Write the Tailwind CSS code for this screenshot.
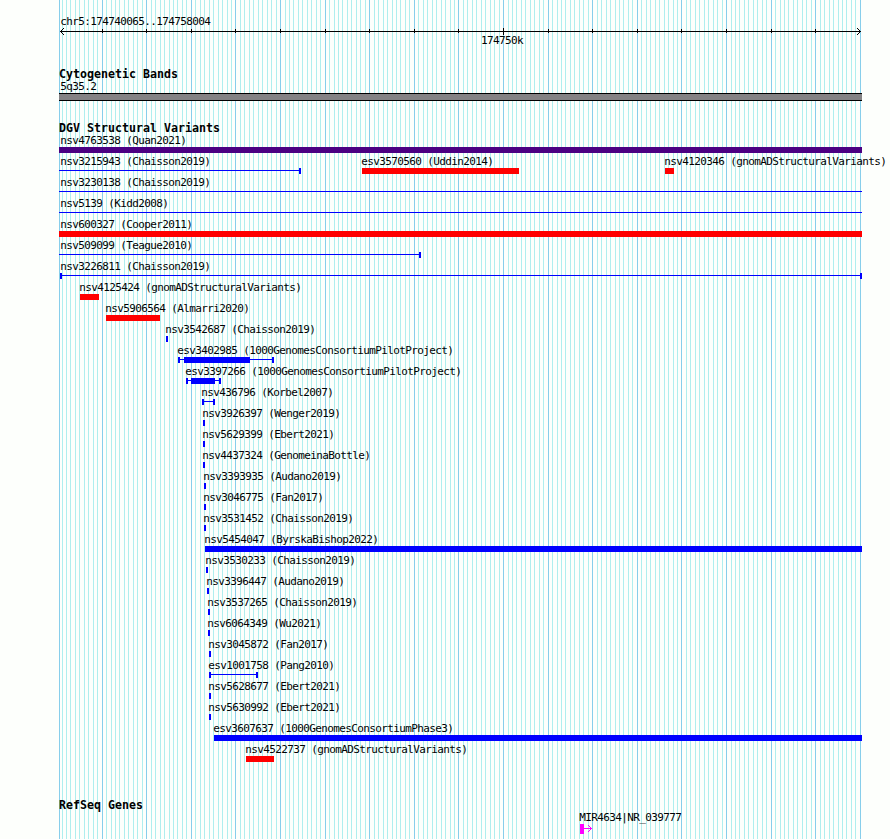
<!DOCTYPE html>
<html lang="en">

<head>
  <meta charset="utf-8" />
  <title>chr5:174740065..174758004</title>
  <meta name="viewport" content="width=device-width, initial-scale=1" />
  <script src="https://cdn.jsdelivr.net/npm/@tailwindcss/browser@4"></script>
</head>

<body class="bg-[#fdfffc]">
  <main class="relative w-[890px] h-[839px] overflow-hidden text-black font-['DejaVu_Sans_Mono',monospace] text-[11px] leading-[14px] tracking-[-0.622px] whitespace-nowrap">
    <!-- grid lines behind the tracks -->
    <svg id="grid" class="absolute inset-0" width="890" height="839" shape-rendering="crispEdges"></svg>

    <div class="relative flex flex-col">
      <!-- scale -->
      <section class="h-[67px] pt-[15px]">
        <div class="pl-[60.3px] h-[12px]">chr5:174740065..174758004</div>
        <svg id="scale" class="block" width="890" height="8" shape-rendering="crispEdges" fill="none" stroke="#000">
          <path d="M60 4.5H861" />
          <path d="M60 4h1v1h-1zM61 3h1v1h-1zM62 2h1v1h-1zM63 1h1v1h-1zM61 5h1v1h-1zM62 6h1v1h-1zM63 7h1v1h-1z" fill="#000" stroke="none" />
          <path d="M860 4h1v1h-1zM859 3h1v1h-1zM858 2h1v1h-1zM857 1h1v1h-1zM859 5h1v1h-1zM858 6h1v1h-1zM857 7h1v1h-1z" fill="#000" stroke="none" />
        </svg>
        <div class="pl-[481px] leading-[12px]">174750k</div>
      </section>

      <!-- cytobands -->
      <section class="h-[54px]">
        <h2 class="pl-[59px] h-[13px] text-[11.63px] font-bold tracking-normal">Cytogenetic Bands</h2>
        <div class="pl-[60.3px] h-[13px]">5q35.2</div>
        <div class="ml-[59px] w-[803px] h-[8px] bg-[#848284] border-y border-black"></div>
      </section>

      <!-- structural variants -->
      <section class="h-[677px]">
        <h2 class="pl-[59px] h-[13px] text-[11.63px] font-bold tracking-normal">DGV Structural Variants</h2>
        <div id="variants"></div>
      </section>

      <!-- genes -->
      <section>
        <h2 class="pl-[59px] h-[13px] text-[11.63px] font-bold tracking-normal">RefSeq Genes</h2>
        <div class="pl-[579.3px] h-[13px]">MIR4634|NR_039777</div>
        <svg class="block ml-[580px]" width="14" height="11" shape-rendering="crispEdges" fill="#f0f">
          <path d="M0 0h4v10h-4zM4 4h8v1h-8zM10 3h1v3h-1zM9 2h1v1h-1zM8 1h1v1h-1zM9 6h1v1h-1zM8 7h1v1h-1z" />
        </svg>
      </section>
    </div>
  </main>

  <script>
    var RED = "#ff0000", BLUE = "#0000ff", INDIGO = "#4b0082";
    var LEFT = 59, RIGHT = 862;

    // each feature: name, label x, colour, thick box [from, to], thin line [from, to], end caps [x, ...]
    var rows = [
      [["nsv4763538 (Quan2021)", 60, INDIGO, [LEFT, RIGHT]]],
      [
        ["nsv3215943 (Chaisson2019)", 60, BLUE, null, [LEFT, 301], [299]],
        ["esv3570560 (Uddin2014)", 361, RED, [362, 519]],
        ["nsv4120346 (gnomADStructuralVariants)", 664, RED, [665, 674]]
      ],
      [["nsv3230138 (Chaisson2019)", 60, BLUE, null, [LEFT, RIGHT]]],
      [["nsv5139 (Kidd2008)", 60, BLUE, null, [LEFT, RIGHT]]],
      [["nsv600327 (Cooper2011)", 60, RED, [LEFT, RIGHT]]],
      [["nsv509099 (Teague2010)", 60, BLUE, null, [LEFT, 421], [419]]],
      [["nsv3226811 (Chaisson2019)", 60, BLUE, null, [60, RIGHT], [60, 860]]],
      [["nsv4125424 (gnomADStructuralVariants)", 79, RED, [80, 99]]],
      [["nsv5906564 (Almarri2020)", 105, RED, [106, 160]]],
      [["nsv3542687 (Chaisson2019)", 165, BLUE, null, null, [166]]],
      [["esv3402985 (1000GenomesConsortiumPilotProject)", 177, BLUE, [184, 250], [178, 274], [178, 272]]],
      [["esv3397266 (1000GenomesConsortiumPilotProject)", 185, BLUE, [191, 215], [186, 221], [186, 219]]],
      [["nsv436796 (Korbel2007)", 201, BLUE, null, [202, 215], [202, 213]]],
      [["nsv3926397 (Wenger2019)", 202, BLUE, null, null, [203]]],
      [["nsv5629399 (Ebert2021)", 202, BLUE, null, null, [203]]],
      [["nsv4437324 (GenomeinaBottle)", 202, BLUE, null, null, [203]]],
      [["nsv3393935 (Audano2019)", 203, BLUE, null, null, [204]]],
      [["nsv3046775 (Fan2017)", 203, BLUE, null, null, [204]]],
      [["nsv3531452 (Chaisson2019)", 203, BLUE, null, null, [204]]],
      [["nsv5454047 (ByrskaBishop2022)", 204, BLUE, [205, RIGHT]]],
      [["nsv3530233 (Chaisson2019)", 205, BLUE, null, null, [206]]],
      [["nsv3396447 (Audano2019)", 206, BLUE, null, null, [207]]],
      [["nsv3537265 (Chaisson2019)", 207, BLUE, null, null, [208]]],
      [["nsv6064349 (Wu2021)", 207, BLUE, null, null, [208]]],
      [["nsv3045872 (Fan2017)", 208, BLUE, null, null, [209]]],
      [["esv1001758 (Pang2010)", 208, BLUE, null, [209, 258], [209, 256]]],
      [["nsv5628677 (Ebert2021)", 208, BLUE, null, null, [209]]],
      [["nsv5630992 (Ebert2021)", 208, BLUE, null, null, [209]]],
      [["esv3607637 (1000GenomesConsortiumPhase3)", 213, BLUE, [214, RIGHT]]],
      [["nsv4522737 (gnomADStructuralVariants)", 245, RED, [246, 274]]]
    ];

    function rect(x, y, w, h, color) {
      return '<rect x="' + x + '" y="' + y + '" width="' + w + '" height="' + h + '" fill="' + color + '"/>';
    }

    // one minor line per 100 bp, one major line per 1 kb
    var grid = rect(59, 0, 1, 839, "#87ceeb");
    var ticks = "";
    for (var i = -9; i <= 170; i++) {
      var x = Math.floor(102.15 + i * 4.46);
      var major = i % 10 === 0;
      grid += rect(x, 0, 1, 839, major ? "#87ceeb" : "#afeeee");
      if (major && i < 170) {
        ticks += i === 90 ? '<path d="M' + (x + 0.5) + ' 1V8"/>' : '<path d="M' + (x + 0.5) + ' 2V6"/>';
      }
    }
    document.getElementById("grid").innerHTML = grid;
    document.getElementById("scale").innerHTML += ticks;

    document.getElementById("variants").innerHTML = rows.map(function (row) {
      var labels = "", shapes = "", end = 0;
      row.forEach(function (f) {
        labels += '<span class="shrink-0" style="margin-left:' + (f[1] + 0.3 - end) + 'px;width:' + f[0].length * 6 + 'px">' + f[0] + '</span>';
        end = f[1] + 0.3 + f[0].length * 6;
        if (f[4]) shapes += rect(f[4][0], 2, f[4][1] - f[4][0], 1, f[2]);
        if (f[3]) shapes += rect(f[3][0], 0, f[3][1] - f[3][0], 6, f[2]);
        (f[5] || []).forEach(function (cap) {
          shapes += rect(cap, 0, 2, 6, f[2]);
        });
      });
      return '<div class="h-[21px]"><div class="flex h-[13px]">' + labels + '</div>' +
        '<svg class="block" width="890" height="6" shape-rendering="crispEdges">' + shapes + '</svg></div>';
    }).join("");
  </script>
</body>

</html>
